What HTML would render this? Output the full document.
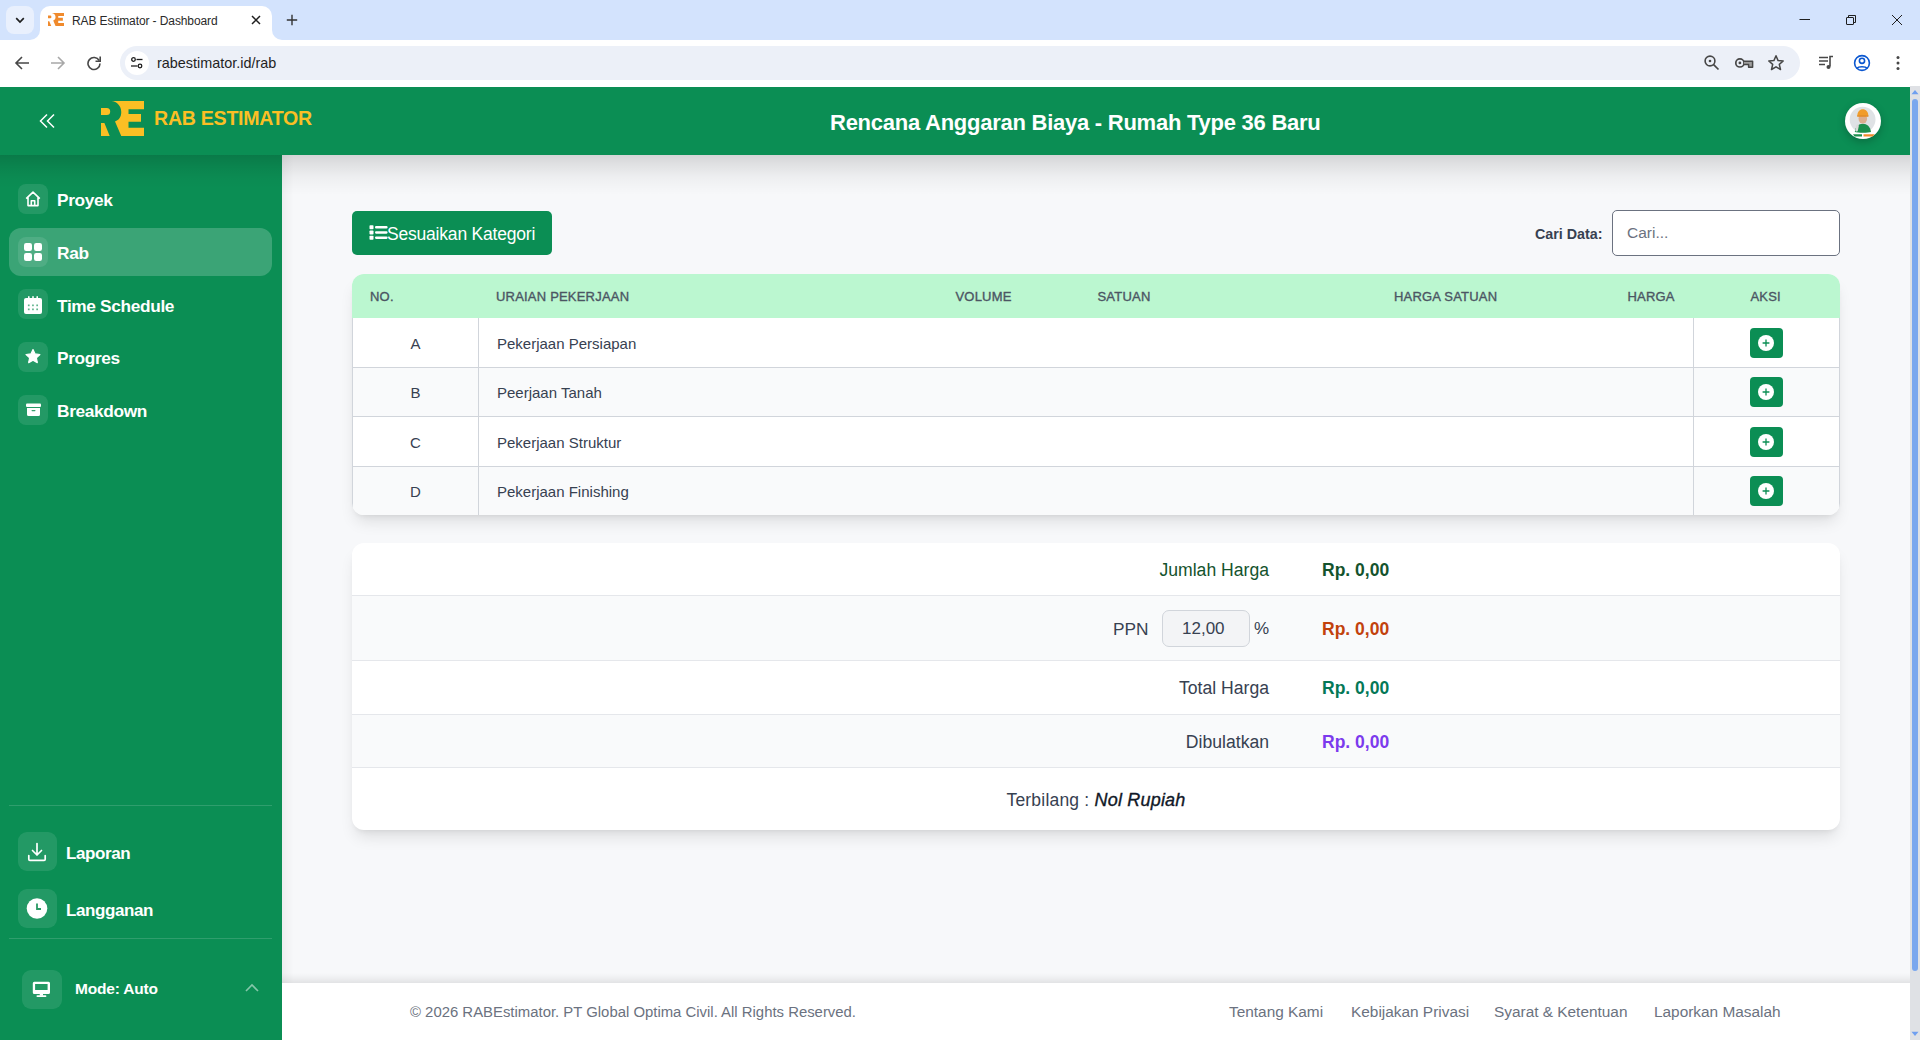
<!DOCTYPE html>
<html><head><meta charset="utf-8">
<style>
*{box-sizing:border-box;margin:0;padding:0}
html,body{width:1920px;height:1040px;overflow:hidden;font-family:"Liberation Sans",sans-serif;background:#fff;position:relative}
.abs{position:absolute}
/* chrome */
#tabstrip{left:0;top:0;width:1920px;height:40px;background:#d3e3fd}
#toolbar{left:0;top:40px;width:1920px;height:47px;background:#fff}
#omni{left:120px;top:46px;width:1680px;height:34px;border-radius:17px;background:#ecf0f8}
/* app */
#hdr{left:0;top:87px;width:1910px;height:68px;background:#0b8e54}
#side{left:0;top:155px;width:282px;height:885px;background:#0b8e54}
#main{left:282px;top:155px;width:1628px;height:828px;background:#f7f8fa}
#foot{left:282px;top:983px;width:1628px;height:57px;background:#fff}
#sb{left:1910px;top:86px;width:10px;height:954px;background:#dfe1e5}

.ib{left:18px;width:30px;height:30px;border-radius:8px;background:rgba(255,255,255,0.1)}
.ib2{width:39px;height:39px;border-radius:9px;background:rgba(255,255,255,0.1)}
.nt{left:57px;font-size:17.3px;font-weight:bold;color:#fff;white-space:nowrap;line-height:24px;letter-spacing:-0.35px}
.nt2{left:66px;font-size:17px;font-weight:bold;color:#fff;white-space:nowrap;line-height:24px;letter-spacing:-0.4px}

.th{top:290px;font-size:13px;font-weight:normal;letter-spacing:0.2px;-webkit-text-stroke:0.35px #4b5563;line-height:13px;color:#4b5563;white-space:nowrap}
.tno{left:352px;width:127px;text-align:center;font-size:15px;line-height:24px;color:#374151}
.tdesc{left:497px;font-size:15px;line-height:24px;color:#374151;white-space:nowrap}
.addb{left:1750px;width:33px;height:30px;border-radius:4px;background:#0b8e54}
.slab{left:1000px;width:269px;text-align:right;font-size:17.6px;line-height:26px;white-space:nowrap}
.sval{left:1322px;font-size:17.5px;font-weight:bold;line-height:26px;white-space:nowrap}

.fl{top:1001px;font-size:15.4px;line-height:22px;color:#6b7280;white-space:nowrap}
</style></head><body>

<div id="tabstrip" class="abs"></div>
<div class="abs" style="left:30px;top:30px;width:10px;height:10px;background:#fff"></div>
<div class="abs" style="left:30px;top:30px;width:10px;height:10px;background:#d3e3fd;border-radius:0 0 10px 0"></div>
<div class="abs" style="left:6px;top:6px;width:28px;height:28px;border-radius:8px;background:#e9f0fd"></div>
<svg class="abs" style="left:14px;top:14px" width="12" height="12" viewBox="0 0 12 12"><path d="M2.2 4.2 L6 8 L9.8 4.2" fill="none" stroke="#1f1f1f" stroke-width="1.7"/></svg>
<div class="abs" style="left:40px;top:6px;width:232px;height:34px;background:#fff;border-radius:10px 10px 0 0"></div>
<div class="abs" style="left:272px;top:30px;width:10px;height:10px;background:#fff"></div>
<div class="abs" style="left:272px;top:30px;width:10px;height:10px;background:#d3e3fd;border-radius:0 0 0 10px"></div>
<svg class="abs" style="left:48px;top:13px" width="16" height="13" viewBox="0 0 43 35"><path d="M0 7H5.7A3.5 3.5 0 0 1 5.7 14H0Z M0 22H3.4L8.7 35H0Z M10.2 0H43V8.2H27.5V13H40V20.7H27.5V26.7H43V35H20.25L14 20.4C18 19 20.25 16 20.25 11C20.25 5 16 0.5 10.2 0Z" fill="#f08a2c"/></svg>
<div class="abs" style="left:72px;top:14px;font-size:12px;color:#2a2a2a;white-space:nowrap;letter-spacing:-0.1px">RAB Estimator - Dashboard</div>
<svg class="abs" style="left:250px;top:14px" width="12" height="12" viewBox="0 0 12 12"><path d="M2 2L10 10M10 2L2 10" stroke="#1f1f1f" stroke-width="1.5"/></svg>
<svg class="abs" style="left:285px;top:13px" width="14" height="14" viewBox="0 0 14 14"><path d="M7 1.8v10.4M1.8 7h10.4" stroke="#333" stroke-width="1.4"/></svg>
<svg class="abs" style="left:1799px;top:14px" width="12" height="12" viewBox="0 0 12 12"><path d="M0.5 5.5h10.5" stroke="#1f1f1f" stroke-width="1"/></svg>
<svg class="abs" style="left:1845px;top:14px" width="12" height="12" viewBox="0 0 12 12"><rect x="1.5" y="3.5" width="7" height="7" rx="0.4" fill="none" stroke="#1f1f1f" stroke-width="1"/><path d="M3.5 3.5V1.5H10.5V8.5H8.5" fill="none" stroke="#1f1f1f" stroke-width="1"/></svg>
<svg class="abs" style="left:1891px;top:14px" width="12" height="12" viewBox="0 0 12 12"><path d="M1 1L11 11M11 1L1 11" stroke="#1f1f1f" stroke-width="1"/></svg>
<div id="toolbar" class="abs"></div>
<svg class="abs" style="left:14px;top:55px" width="16" height="16" viewBox="0 0 16 16"><path d="M15 8H2M8 2L2 8L8 14" fill="none" stroke="#474747" stroke-width="1.6"/></svg>
<svg class="abs" style="left:50px;top:55px" width="16" height="16" viewBox="0 0 16 16"><path d="M1 8H14M8 2L14 8L8 14" fill="none" stroke="#a8a8a8" stroke-width="1.6"/></svg>
<svg class="abs" style="left:86px;top:55px" width="16" height="16" viewBox="0 0 16 16"><path d="M13.2 5.5A6 6 0 1 0 14 8.5" fill="none" stroke="#474747" stroke-width="1.6"/><path d="M14.2 1.5V6.2H9.5" fill="none" stroke="#474747" stroke-width="1.6"/></svg>
<div id="omni" class="abs"></div>
<div class="abs" style="left:125px;top:51px;width:24px;height:24px;border-radius:12px;background:#fff"></div>
<svg class="abs" style="left:130px;top:56px" width="14" height="14" viewBox="0 0 14 14"><circle cx="3.5" cy="3.5" r="1.8" fill="none" stroke="#1f1f1f" stroke-width="1.3"/><path d="M6.5 3.5h6" stroke="#1f1f1f" stroke-width="1.3"/><circle cx="10" cy="10" r="1.8" fill="none" stroke="#1f1f1f" stroke-width="1.3"/><path d="M1 10h6.5" stroke="#1f1f1f" stroke-width="1.3"/></svg>
<div class="abs" style="left:157px;top:55px;font-size:14.4px;color:#1f1f1f;white-space:nowrap">rabestimator.id/rab</div>
<svg class="abs" style="left:1702px;top:53px" width="18" height="18" viewBox="0 0 18 18"><circle cx="8" cy="8" r="4.9" fill="none" stroke="#474747" stroke-width="1.6"/><path d="M11.6 11.6L16.5 16.5" stroke="#474747" stroke-width="1.7"/><circle cx="8" cy="8" r="1.3" fill="#474747"/></svg>
<svg class="abs" style="left:1734px;top:53px" width="21" height="18" viewBox="0 0 21 18"><circle cx="5.9" cy="9.9" r="4.1" fill="none" stroke="#474747" stroke-width="1.7"/><circle cx="5.9" cy="9.9" r="1.4" fill="#474747"/><path d="M10 8.2H18.6V14.2H14.6V11.6H10" fill="#9e9e9e" stroke="#474747" stroke-width="1.5" stroke-linejoin="round"/></svg>
<svg class="abs" style="left:1767px;top:54px" width="18" height="18" viewBox="0 0 18 18"><path d="M9 1.8L11.1 6.6L16.2 7L12.3 10.4L13.5 15.5L9 12.8L4.5 15.5L5.7 10.4L1.8 7L6.9 6.6Z" fill="none" stroke="#474747" stroke-width="1.5" stroke-linejoin="round"/></svg>
<svg class="abs" style="left:1817px;top:53px" width="18" height="18" viewBox="0 0 18 18"><path d="M2 4.5h9M2 8h9M2 11.5h6" stroke="#474747" stroke-width="1.5"/><path d="M13 13.5V3.5H16" fill="none" stroke="#474747" stroke-width="1.6"/><circle cx="11.5" cy="14" r="2" fill="#474747"/></svg>
<svg class="abs" style="left:1852px;top:53px" width="20" height="20" viewBox="0 0 20 20"><circle cx="10" cy="10" r="7.4" fill="none" stroke="#0b57d0" stroke-width="1.6"/><circle cx="10" cy="7.8" r="2.6" fill="none" stroke="#0b57d0" stroke-width="1.6"/><path d="M4.8 15.5C6.5 13.2 13.5 13.2 15.2 15.5" fill="none" stroke="#0b57d0" stroke-width="1.6"/></svg>
<svg class="abs" style="left:1890px;top:54px" width="16" height="18" viewBox="0 0 16 18"><circle cx="8" cy="3.5" r="1.5" fill="#474747"/><circle cx="8" cy="9" r="1.5" fill="#474747"/><circle cx="8" cy="14.5" r="1.5" fill="#474747"/></svg>

<div id="hdr" class="abs"></div>
<svg class="abs" style="left:38px;top:112px" width="18" height="18" viewBox="0 0 18 18"><path d="M9 2.5L2.5 9L9 15.5M16 2.5L9.5 9L16 15.5" fill="none" stroke="#fff" stroke-width="1.5"/></svg>
<svg class="abs" style="left:101px;top:101px" width="43" height="35" viewBox="0 0 43 35"><path d="M0 7H5.7A3.5 3.5 0 0 1 5.7 14H0Z M0 22H3.4L8.7 35H0Z M10.2 0H43V8.2H27.5V13H40V20.7H27.5V26.7H43V35H20.25L14 20.4C18 19 20.25 16 20.25 11C20.25 5 16 0.5 10.2 0Z" fill="#fbbf24"/></svg>
<div class="abs" style="left:154px;top:106px;font-size:19.6px;font-weight:bold;color:#fbbf24;letter-spacing:-0.27px;white-space:nowrap;line-height:24px">RAB ESTIMATOR</div>
<div class="abs" style="left:830px;top:109px;font-size:22px;font-weight:bold;color:#fff;letter-spacing:-0.25px;white-space:nowrap;line-height:28px">Rencana Anggaran Biaya - Rumah Type 36 Baru</div>
<div class="abs" style="left:1845px;top:103px;width:36px;height:36px;border-radius:18px;background:#fff;box-shadow:0 3px 8px rgba(0,0,0,0.22)"></div>
<svg class="abs" style="left:1845px;top:103px" width="36" height="36" viewBox="0 0 36 36">
<circle cx="17.6" cy="16.6" r="12.9" fill="#dfe2e5"/>
<path d="M9.8 29C10.5 23.5 13.5 20.8 17.8 20.8C22.1 20.8 25.1 23.5 26 29C23.5 30 12.5 30 9.8 29Z" fill="#1b8f4c"/>
<rect x="11" y="21.5" width="2.6" height="7" rx="1.2" fill="#d9d9d9" transform="rotate(12 12 24)"/>
<ellipse cx="17.8" cy="15.8" rx="4.3" ry="4.8" fill="#dcae8e"/>
<path d="M12.3 12.8C12.3 8.8 14.8 6.3 17.8 6.3C20.8 6.3 23.3 8.8 23.3 12.8Z" fill="#f19c2a"/>
<rect x="12" y="12.3" width="11.6" height="1.5" rx="0.7" fill="#e58a1f"/>
<path d="M8 31.2H17V33.6H9.6Z" fill="#1b8f4c"/>
<path d="M18.5 31.2H29.6L27.6 33.6H18.5Z" fill="#f08a2c"/>
</svg>
<div id="side" class="abs"></div>
<div class="abs" style="left:0;top:155px;width:282px;height:34px;background:linear-gradient(rgba(0,0,0,0.14),rgba(0,0,0,0.07) 35%,rgba(0,0,0,0.02) 70%,rgba(0,0,0,0))"></div>
<div class="abs" style="left:9px;top:228px;width:263px;height:48px;border-radius:12px;background:rgba(255,255,255,0.2)"></div>
<div class="abs ib" style="top:184px"></div>
<div class="abs ib" style="top:237px"></div>
<div class="abs ib" style="top:289px"></div>
<div class="abs ib" style="top:342px"></div>
<div class="abs ib" style="top:395px"></div>
<svg class="abs" style="left:25px;top:191px" width="16" height="16" viewBox="0 0 16 16"><path d="M1.2 7.6L8 1.2L14.8 7.6M3 6V14.6H13V6M6.3 14.6V9.8H9.7V14.6" fill="none" stroke="#fff" stroke-width="1.6" stroke-linejoin="round"/></svg>
<svg class="abs" style="left:24px;top:243px" width="18" height="18" viewBox="0 0 18 18"><rect x="0" y="0" width="8" height="8" rx="2.2" fill="#fff"/><rect x="10" y="0" width="8" height="8" rx="2.2" fill="#fff"/><rect x="0" y="10" width="8" height="8" rx="2.2" fill="#fff"/><rect x="10" y="10" width="8" height="8" rx="2.2" fill="#fff"/></svg>
<svg class="abs" style="left:24px;top:296px" width="18" height="18" viewBox="0 0 18 18"><rect x="0" y="2" width="18" height="16" rx="2" fill="#fff"/><rect x="4" y="0" width="1.6" height="4" rx="0.8" fill="#fff"/><rect x="8.2" y="0" width="1.6" height="4" rx="0.8" fill="#fff"/><rect x="12.4" y="0" width="1.6" height="4" rx="0.8" fill="#fff"/><g fill="#5fb38c"><rect x="3.9" y="8.5" width="1.7" height="1.7"/><rect x="8.1" y="8.5" width="1.7" height="1.7"/><rect x="12.3" y="8.5" width="1.7" height="1.7"/><rect x="3.9" y="12.5" width="1.7" height="1.7"/><rect x="8.1" y="12.5" width="1.7" height="1.7"/><rect x="12.3" y="12.5" width="1.7" height="1.7"/></g></svg>
<svg class="abs" style="left:25px;top:349px" width="16" height="15" viewBox="0 0 16 15"><path d="M8 0.6L10.1 4.9L14.9 5.5L11.4 8.8L12.3 13.6L8 11.3L3.7 13.6L4.6 8.8L1.1 5.5L5.9 4.9Z" fill="#fff" stroke="#fff" stroke-width="1.2" stroke-linejoin="round"/></svg>
<svg class="abs" style="left:26px;top:403px" width="15" height="14" viewBox="0 0 15 14"><rect x="0" y="0.5" width="15" height="3.5" rx="1" fill="#fff"/><path d="M1 5H14V11.5A1.5 1.5 0 0 1 12.5 13H2.5A1.5 1.5 0 0 1 1 11.5Z" fill="#fff"/><rect x="5.5" y="7" width="4" height="1.2" rx="0.6" fill="#3aa06f"/></svg>
<div class="abs nt" style="top:188px">Proyek</div>
<div class="abs nt" style="top:241px">Rab</div>
<div class="abs nt" style="top:294px">Time Schedule</div>
<div class="abs nt" style="top:346px">Progres</div>
<div class="abs nt" style="top:399px">Breakdown</div>
<div class="abs" style="left:9px;top:805px;width:263px;height:1px;background:rgba(255,255,255,0.15)"></div>
<div class="abs ib2" style="left:18px;top:832px"></div>
<div class="abs ib2" style="left:18px;top:889px"></div>
<svg class="abs" style="left:27px;top:842px" width="20" height="20" viewBox="0 0 20 20"><path d="M10 1.5V13M5.5 8.5L10 13L14.5 8.5M1.8 13.5V17.2C1.8 17.9 2.3 18.3 2.9 18.3H17.1C17.7 18.3 18.2 17.9 18.2 17.2V13.5" fill="none" stroke="#fff" stroke-width="1.7" stroke-linecap="round" stroke-linejoin="round"/></svg>
<svg class="abs" style="left:26px;top:898px" width="22" height="22" viewBox="0 0 22 22"><circle cx="11" cy="10.5" r="10.3" fill="#fff"/><path d="M11 5.5V11H15" fill="none" stroke="#2a9a64" stroke-width="1.8"/></svg>
<div class="abs nt2" style="top:842px">Laporan</div>
<div class="abs nt2" style="top:899px">Langganan</div>
<div class="abs" style="left:9px;top:938px;width:263px;height:1px;background:rgba(255,255,255,0.15)"></div>
<div class="abs ib2" style="left:22px;top:970px;width:40px"></div>
<svg class="abs" style="left:32px;top:981px" width="19" height="17" viewBox="0 0 19 17"><path fill-rule="evenodd" d="M2.3 0.75H16.5A1.5 1.5 0 0 1 18 2.25V11.4A1.5 1.5 0 0 1 16.5 12.9H2.3A1.5 1.5 0 0 1 0.8 11.4V2.25A1.5 1.5 0 0 1 2.3 0.75Z M3.1 3.1V8.9H15.6V3.1Z" fill="#fff"/><rect x="7.75" y="12.5" width="3.25" height="2.2" fill="#fff"/><rect x="4.5" y="14.25" width="9.9" height="1.7" rx="0.8" fill="#fff"/></svg>
<div class="abs" style="left:75px;top:979px;font-size:15.5px;font-weight:bold;color:#fff;white-space:nowrap;line-height:20px;letter-spacing:-0.2px">Mode: Auto</div>
<svg class="abs" style="left:244px;top:982px" width="16" height="12" viewBox="0 0 16 12"><path d="M2 9L8 3L14 9" fill="none" stroke="rgba(255,255,255,0.5)" stroke-width="1.6"/></svg>

<div id="main" class="abs"></div>
<div class="abs" style="left:282px;top:155px;width:1628px;height:40px;background:linear-gradient(rgba(0,0,0,0.14),rgba(0,0,0,0.09) 25%,rgba(0,0,0,0.04) 55%,rgba(0,0,0,0.01) 85%,rgba(0,0,0,0))"></div>
<div class="abs" style="left:282px;top:155px;width:12px;height:828px;background:linear-gradient(90deg,rgba(0,0,0,0.045),rgba(0,0,0,0.02) 50%,rgba(0,0,0,0))"></div>
<div class="abs" style="left:352px;top:211px;width:200px;height:44px;border-radius:5px;background:#0b8e54"></div>
<svg class="abs" style="left:369px;top:225px" width="19" height="15" viewBox="0 0 19 15"><g fill="#fff"><rect x="0.5" y="0.3" width="4" height="4" rx="0.8"/><rect x="0.5" y="5.5" width="4" height="4" rx="0.8"/><rect x="0.5" y="10.7" width="4" height="4" rx="0.8"/><rect x="6" y="1.1" width="12.6" height="2.4" rx="1.1"/><rect x="6" y="6.3" width="12.6" height="2.4" rx="1.1"/><rect x="6" y="11.5" width="12.6" height="2.4" rx="1.1"/></g></svg>
<div class="abs" style="left:387px;top:221.5px;font-size:17.5px;letter-spacing:-0.2px;line-height:24px;color:#fff;white-space:nowrap">Sesuaikan Kategori</div>
<div class="abs" style="left:1535px;top:223px;font-size:14.3px;font-weight:bold;line-height:22px;color:#374151;white-space:nowrap">Cari Data:</div>
<div class="abs" style="left:1612px;top:210px;width:228px;height:46px;border-radius:5px;background:#fff;border:1px solid #6b7280"></div>
<div class="abs" style="left:1627px;top:221px;font-size:15.5px;line-height:24px;color:#6b7280;white-space:nowrap">Cari...</div>

<div class="abs" style="left:352px;top:274px;width:1488px;height:241px;border-radius:12px;background:#fff;box-shadow:0 10px 15px -3px rgba(0,0,0,0.1),0 4px 6px -4px rgba(0,0,0,0.1);overflow:hidden">
  <div class="abs" style="left:0;top:0;width:1488px;height:44px;background:#bbf7d0"></div>
  <div class="abs" style="left:0;top:93px;width:1488px;height:49px;background:#f9fafb"></div>
  <div class="abs" style="left:0;top:192px;width:1488px;height:50px;background:#f9fafb"></div>
  <div class="abs" style="left:0;top:44px;width:1px;height:198px;background:#d1d5db"></div>
  <div class="abs" style="left:1487px;top:44px;width:1px;height:198px;background:#d1d5db"></div>
  <div class="abs" style="left:126px;top:44px;width:1px;height:198px;background:#d1d5db"></div>
  <div class="abs" style="left:1341px;top:44px;width:1px;height:198px;background:#d1d5db"></div>
  <div class="abs" style="left:0;top:93px;width:1488px;height:1px;background:#d1d5db"></div>
  <div class="abs" style="left:0;top:142px;width:1488px;height:1px;background:#d1d5db"></div>
  <div class="abs" style="left:0;top:192px;width:1488px;height:1px;background:#d1d5db"></div>
</div>
<div class="abs th" style="left:370px">NO.</div>
<div class="abs th" style="left:496px">URAIAN PEKERJAAN</div>
<div class="abs th" style="left:955.5px">VOLUME</div>
<div class="abs th" style="left:1097.5px">SATUAN</div>
<div class="abs th" style="left:1394px">HARGA SATUAN</div>
<div class="abs th" style="left:1627.5px">HARGA</div>
<div class="abs th" style="left:1750.5px">AKSI</div>
<div class="abs tno" style="top:332px">A</div>
<div class="abs tno" style="top:381px">B</div>
<div class="abs tno" style="top:431px">C</div>
<div class="abs tno" style="top:480px">D</div>
<div class="abs tdesc" style="top:332px">Pekerjaan Persiapan</div>
<div class="abs tdesc" style="top:381px">Peerjaan Tanah</div>
<div class="abs tdesc" style="top:431px">Pekerjaan Struktur</div>
<div class="abs tdesc" style="top:480px">Pekerjaan Finishing</div>
<div class="abs addb" style="top:328px"></div>
<div class="abs addb" style="top:377px"></div>
<div class="abs addb" style="top:427px"></div>
<div class="abs addb" style="top:476px"></div>
<svg class="abs" style="left:1758px;top:335px" width="16" height="16" viewBox="0 0 16 16"><circle cx="8" cy="8" r="8" fill="#fff"/><path d="M8 4.6V11.4M4.6 8H11.4" stroke="#0b8e54" stroke-width="1.3"/></svg>
<svg class="abs" style="left:1758px;top:384px" width="16" height="16" viewBox="0 0 16 16"><circle cx="8" cy="8" r="8" fill="#fff"/><path d="M8 4.6V11.4M4.6 8H11.4" stroke="#0b8e54" stroke-width="1.3"/></svg>
<svg class="abs" style="left:1758px;top:434px" width="16" height="16" viewBox="0 0 16 16"><circle cx="8" cy="8" r="8" fill="#fff"/><path d="M8 4.6V11.4M4.6 8H11.4" stroke="#0b8e54" stroke-width="1.3"/></svg>
<svg class="abs" style="left:1758px;top:483px" width="16" height="16" viewBox="0 0 16 16"><circle cx="8" cy="8" r="8" fill="#fff"/><path d="M8 4.6V11.4M4.6 8H11.4" stroke="#0b8e54" stroke-width="1.3"/></svg>

<div class="abs" style="left:352px;top:543px;width:1488px;height:287px;border-radius:12px;background:#fff;box-shadow:0 10px 15px -3px rgba(0,0,0,0.1),0 4px 6px -4px rgba(0,0,0,0.1);overflow:hidden">
  <div class="abs" style="left:0;top:52px;width:1488px;height:1px;background:#e5e7eb"></div>
  <div class="abs" style="left:0;top:53px;width:1488px;height:64px;background:#f9fafb"></div>
  <div class="abs" style="left:0;top:117px;width:1488px;height:1px;background:#e5e7eb"></div>
  <div class="abs" style="left:0;top:171px;width:1488px;height:1px;background:#e5e7eb"></div>
  <div class="abs" style="left:0;top:172px;width:1488px;height:52px;background:#f9fafb"></div>
  <div class="abs" style="left:0;top:224px;width:1488px;height:1px;background:#e5e7eb"></div>
</div>
<div class="abs slab" style="top:557px;color:#14532d">Jumlah Harga</div>
<div class="abs sval" style="top:557px;color:#14532d">Rp. 0,00</div>
<div class="abs" style="left:1113px;top:617px;font-size:17.3px;line-height:24px;color:#374151;white-space:nowrap">PPN</div>
<div class="abs" style="left:1162px;top:610px;width:88px;height:37px;border-radius:7px;background:#f3f4f6;border:1px solid #d1d5db"></div>
<div class="abs" style="left:1182px;top:617px;font-size:17px;line-height:24px;color:#374151;white-space:nowrap">12,00</div>
<div class="abs" style="left:1254px;top:617px;font-size:17px;line-height:24px;color:#374151;white-space:nowrap">%</div>
<div class="abs sval" style="top:616px;color:#c2410c">Rp. 0,00</div>
<div class="abs slab" style="top:675px;color:#374151">Total Harga</div>
<div class="abs sval" style="top:675px;color:#047857">Rp. 0,00</div>
<div class="abs slab" style="top:729px;color:#374151">Dibulatkan</div>
<div class="abs sval" style="top:729px;color:#7c3aed">Rp. 0,00</div>
<div class="abs" style="left:352px;top:788px;width:1488px;text-align:center;font-size:17.5px;line-height:25px;letter-spacing:0.2px;color:#374151;white-space:nowrap">Terbilang : <span style="font-style:italic;font-size:18px;-webkit-text-stroke:0.35px #111827;color:#111827">Nol Rupiah</span></div>

<div id="foot" class="abs"></div>
<div class="abs" style="left:282px;top:973px;width:1628px;height:10px;background:linear-gradient(rgba(0,0,0,0),rgba(0,0,0,0.035) 50%,rgba(0,0,0,0.085))"></div>
<div class="abs" style="left:410px;top:1001px;font-size:14.9px;line-height:22px;color:#6b7280;white-space:nowrap">© 2026 RABEstimator. PT Global Optima Civil. All Rights Reserved.</div>
<div class="abs fl" style="left:1229px">Tentang Kami</div>
<div class="abs fl" style="left:1351px">Kebijakan Privasi</div>
<div class="abs fl" style="left:1494px">Syarat &amp; Ketentuan</div>
<div class="abs fl" style="left:1654px">Laporkan Masalah</div>
<div id="sb" class="abs"></div>
<svg class="abs" style="left:1911px;top:89px" width="8" height="6" viewBox="0 0 8 6"><path d="M0.5 5.2L4 1L7.5 5.2Z" fill="#6f9ff0"/></svg>
<div class="abs" style="left:1912px;top:99px;width:6px;height:872px;border-radius:3px;background:#7aa7ee"></div>
<svg class="abs" style="left:1911px;top:1031px" width="8" height="6" viewBox="0 0 8 6"><path d="M0.5 0.8L4 5L7.5 0.8Z" fill="#6f9ff0"/></svg>
</body></html>
